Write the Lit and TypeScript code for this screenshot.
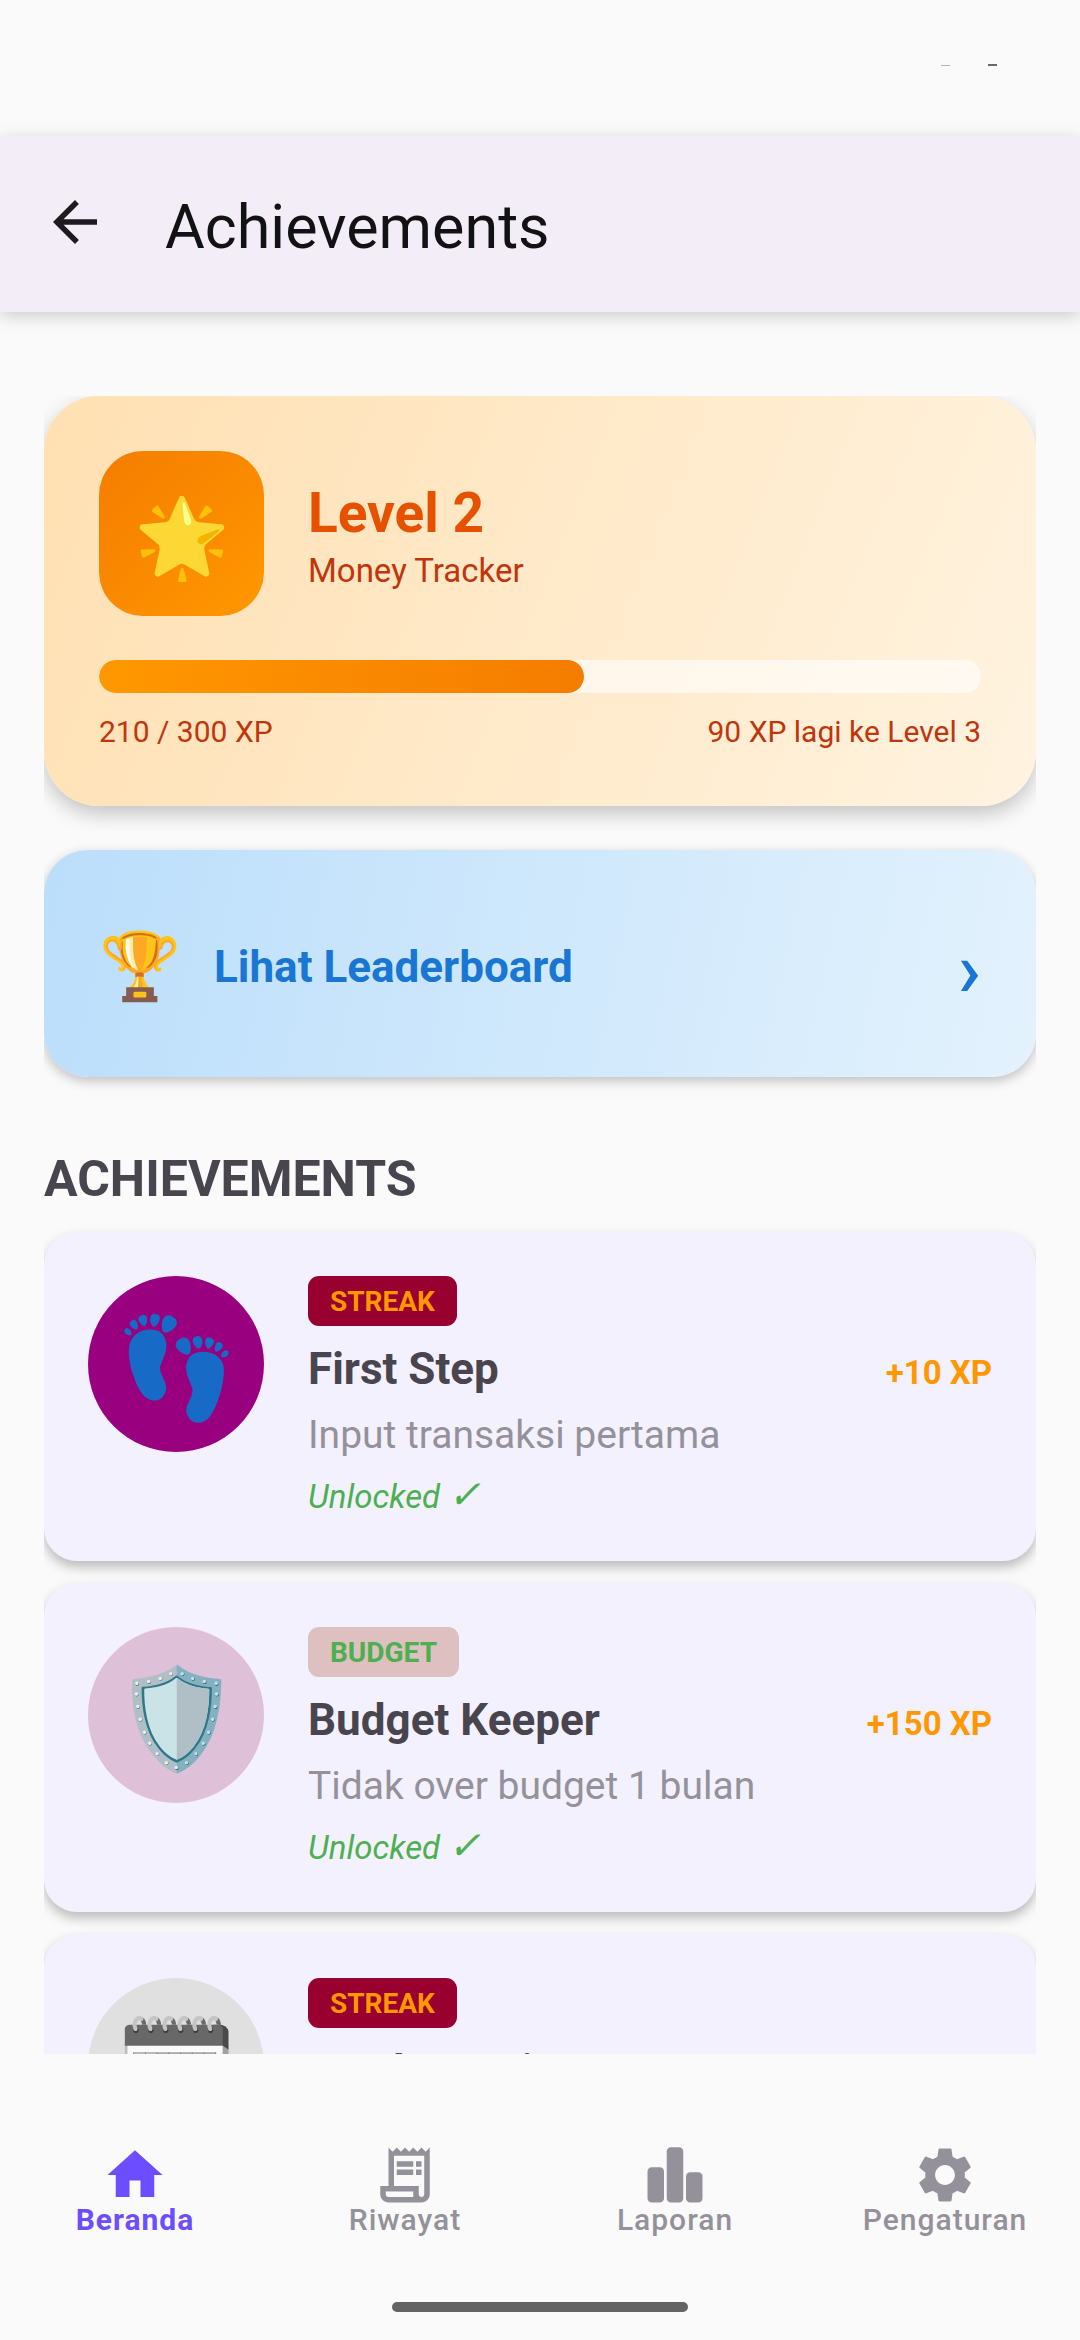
import { LitElement, html, css, svg, nothing } from "lit";
import { customElement, property, state } from "lit/decorators.js";
import { classMap } from "lit/directives/class-map.js";

interface Achievement {
  icon: string;
  category: "streak" | "budget";
  title: string;
  description: string;
  xp: number;
  unlocked: boolean;
}

interface Tab {
  id: string;
  label: string;
  path: string;
}

const ACHIEVEMENTS: Achievement[] = [
  {
    icon: "👣",
    category: "streak",
    title: "First Step",
    description: "Input transaksi pertama",
    xp: 10,
    unlocked: true,
  },
  {
    icon: "🛡️",
    category: "budget",
    title: "Budget Keeper",
    description: "Tidak over budget 1 bulan",
    xp: 150,
    unlocked: true,
  },
  {
    icon: "🗓️",
    category: "streak",
    title: "Week Warrior",
    description: "",
    xp: 0,
    unlocked: false,
  },
];

const TABS: Tab[] = [
  {
    id: "home",
    label: "Beranda",
    path: "M10 20v-6h4v6h5v-8h3L12 3 2 12h3v8z",
  },
  {
    id: "history",
    label: "Riwayat",
    path: "M19.5 3.5L18 2l-1.500 1.500L15 2l-1.500 1.500L12 2l-1.500 1.500L9 2 7.500 3.500 6 2v14H3v3c0 1.660 1.340 3 3 3h12c1.660 0 3-1.340 3-3V2l-1.500 1.500zM15 20H6c-.55 0-1-.45-1-1v-1h10v2zm4-1c0 .55-.45 1-1 1s-1-.45-1-1v-3H8V5h11v14zM9 7h6v2H9zm7 0h2v2h-2zM9 10h6v2H9zm7 0h2v2h-2z",
  },
  {
    id: "report",
    label: "Laporan",
    path: "M3.500 9.200h3A1.500 1.500 0 0 1 8 10.700v9.800A1.500 1.500 0 0 1 6.500 22h-3A1.500 1.500 0 0 1 2 20.500v-9.800A1.500 1.500 0 0 1 3.500 9.200zM10.500 1.900h3A1.500 1.500 0 0 1 15 3.400v17.100a1.500 1.500 0 0 1-1.500 1.500h-3A1.500 1.500 0 0 1 9 20.500V3.400a1.500 1.500 0 0 1 1.500-1.500zM17.500 11h3a1.500 1.500 0 0 1 1.500 1.500v8a1.500 1.500 0 0 1-1.500 1.500h-3a1.500 1.500 0 0 1-1.500-1.500v-8a1.500 1.500 0 0 1 1.500-1.500z",
  },
  {
    id: "settings",
    label: "Pengaturan",
    path: "M19.140 12.940c.04-.3.06-.61.06-.94 0-.32-.02-.64-.07-.94l2.030-1.580c.18-.14.23-.41.12-.61l-1.920-3.320c-.12-.22-.37-.29-.59-.22l-2.390.96c-.5-.38-1.030-.7-1.620-.94l-.36-2.540c-.04-.24-.24-.41-.48-.41h-3.840c-.24 0-.43.17-.47.41l-.36 2.540c-.59.24-1.130.57-1.620.94l-2.390-.96c-.22-.08-.47 0-.59.22L2.740 8.870c-.12.21-.08.47.12.61l2.030 1.580c-.05.3-.09.63-.09.94s.02.64.07.94l-2.030 1.580c-.18.14-.23.41-.12.61l1.920 3.320c.12.22.37.29.59.22l2.390-.96c.5.38 1.030.7 1.620.94l.36 2.540c.05.24.24.41.48.41h3.840c.24 0 .44-.17.47-.41l.36-2.540c.59-.24 1.130-.56 1.620-.94l2.390.96c.22.08.47 0 .59-.22l1.920-3.320c.12-.22.07-.47-.12-.61l-2.010-1.580zM12 15.600c-1.980 0-3.600-1.620-3.600-3.600s1.620-3.600 3.600-3.600 3.600 1.620 3.600 3.600-1.620 3.600-3.600 3.600z",
  },
];

@customElement("level-card")
export class LevelCard extends LitElement {
  static styles = css`
    :host {
      display: block;
    }

    .card {
      padding: 55px;
      border-radius: 55px;
      background: linear-gradient(112deg, #ffe0b2, #fff3e0);
      box-shadow: 0 8px 20px rgba(0, 0, 0, 0.22);
      color: #bf360c;
    }

    .head {
      display: flex;
      align-items: center;
      gap: 44px;
    }

    .emblem {
      display: grid;
      place-items: center;
      width: 165px;
      height: 165px;
      padding-top: 8px;
      border-radius: 44px;
      background: linear-gradient(135deg, #f57c00, #ff9800);
      box-sizing: border-box;
      font-size: 77px;
      line-height: 90px;
    }

    h2 {
      margin: 0;
      font-size: 55px;
      line-height: 74px;
      color: #e65100;
    }

    .rank {
      margin: 0;
      font-size: 33px;
      line-height: 41px;
    }

    .track {
      height: 33px;
      margin: 44px 0 20px;
      border-radius: 17px;
      background: rgba(255, 255, 255, 0.6);
      overflow: hidden;
    }

    .fill {
      height: 100%;
      border-radius: 17px;
      background: linear-gradient(90deg, #ff9800, #f57c00);
    }

    .numbers {
      display: flex;
      justify-content: space-between;
      font-size: 30px;
      line-height: 38px;
    }
  `;

  @property({ type: Number })
  level = 1;

  @property({ type: String })
  rank = "";

  @property({ type: Number })
  xp = 0;

  @property({ type: Number })
  floor = 0;

  @property({ type: Number })
  target = 100;

  render() {
    const progress = ((this.xp - this.floor) / (this.target - this.floor)) * 100;
    return html`
      <section class="card">
        <div class="head">
          <div class="emblem">🌟</div>
          <div>
            <h2>Level ${this.level}</h2>
            <p class="rank">${this.rank}</p>
          </div>
        </div>
        <div class="track">
          <div class="fill" style="width: ${progress}%"></div>
        </div>
        <div class="numbers">
          <span>${this.xp} / ${this.target} XP</span>
          <span>${this.target - this.xp} XP lagi ke Level ${this.level + 1}</span>
        </div>
      </section>
    `;
  }
}

@customElement("achievement-card")
export class AchievementCard extends LitElement {
  static styles = css`
    :host {
      display: block;
    }

    .card {
      display: flex;
      align-items: flex-start;
      gap: 44px;
      padding: 44px;
      border-radius: 33px;
      background: #f4f1ff;
      box-shadow: 0 6px 12px rgba(0, 0, 0, 0.26);
    }

    .icon {
      display: grid;
      place-items: center;
      flex: none;
      width: 176px;
      height: 176px;
      padding-top: 8px;
      border-radius: 50%;
      background: #e0e0e0;
      box-sizing: border-box;
      font-size: 99px;
      line-height: 116px;
    }

    .icon.streak {
      background: #980080;
    }

    .icon.budget {
      background: rgba(175, 80, 128, 0.3);
    }

    .icon.locked {
      background: #e0e0e0;
      filter: grayscale(1);
    }

    .body {
      display: flex;
      flex: 1;
      flex-direction: column;
      align-items: flex-start;
      gap: 18px;
    }

    .badge {
      padding: 9px 22px 7px;
      border-radius: 11px;
      font-size: 28px;
      font-weight: 700;
      line-height: 34px;
      text-transform: uppercase;
    }

    .badge.streak {
      background: #980030;
      color: #ff9800;
    }

    .badge.budget {
      background: rgba(175, 80, 48, 0.3);
      color: #4caf50;
    }

    .row {
      display: flex;
      align-items: baseline;
      justify-content: space-between;
      align-self: stretch;
    }

    h3 {
      margin: 0;
      font-size: 44px;
      line-height: 50px;
      color: #49454f;
    }

    .xp {
      font-size: 33px;
      font-weight: 700;
      line-height: 40px;
      color: #ff9800;
    }

    .description {
      margin: 0;
      font-size: 39px;
      line-height: 46px;
      color: #94919b;
    }

    .status {
      margin: 0;
      font-size: 33px;
      font-style: italic;
      line-height: 41px;
      color: #4caf50;
    }

    .check {
      font-family: Roboto, sans-serif;
      font-size: 39px;
      line-height: 20px;
    }
  `;

  @property({ attribute: false })
  item!: Achievement;

  render() {
    const { icon, category, title, description, xp, unlocked } = this.item;
    const iconClasses = { icon: true, [category]: true, locked: !unlocked };
    return html`
      <article class="card">
        <div class=${classMap(iconClasses)}>${icon}</div>
        <div class="body">
          <span class="badge ${category}">${category}</span>
          <div class="row">
            <h3>${title}</h3>
            ${xp ? html`<span class="xp">+${xp} XP</span>` : nothing}
          </div>
          <p class="description">${description}</p>
          ${unlocked ? html`<p class="status">Unlocked <span class="check">✓</span></p>` : nothing}
        </div>
      </article>
    `;
  }
}

@customElement("app-root")
export class AppRoot extends LitElement {
  static styles = css`
    :host {
      display: flex;
      flex-direction: column;
      height: 100vh;
      background: #fafafa;
      font-family: Roboto, sans-serif;
    }

    button {
      border: 0;
      background: none;
      font: inherit;
      cursor: pointer;
    }

    svg {
      display: block;
      width: 66px;
      height: 66px;
      fill: currentColor;
    }

    .status-bar {
      display: flex;
      flex: none;
      align-items: center;
      justify-content: flex-end;
      gap: 38px;
      height: 130px;
      padding: 0 83px 6px 0;
    }

    .mark {
      width: 9px;
      height: 2px;
      background: #6a6a6a;
    }

    .mark.faint {
      height: 1px;
      background: #b4b4b4;
    }

    .app-bar {
      display: flex;
      flex: none;
      align-items: center;
      gap: 57px;
      height: 176px;
      padding: 0 42px;
      background: #f3edf7;
      box-shadow: 0 4px 16px rgba(0, 0, 0, 0.18);
      box-sizing: border-box;
    }

    .back {
      padding: 0 0 4px;
      color: #1d1b20;
    }

    h1 {
      margin: 0;
      padding-top: 6px;
      font-size: 61px;
      font-weight: 400;
      line-height: 72px;
      color: #121214;
    }

    .content {
      flex: 1;
      min-height: 0;
      margin: 84px 44px 0;
      overflow: hidden auto;
      scrollbar-width: none;
    }

    .leaderboard {
      display: flex;
      align-items: center;
      gap: 33px;
      width: 100%;
      min-height: 227px;
      margin-top: 44px;
      padding: 6px 55px 0;
      border-radius: 44px;
      background: linear-gradient(102deg, #bbdefb, #e3f2fd);
      box-shadow: 0 4px 12px rgba(0, 0, 0, 0.24);
      color: #1976d2;
      text-align: left;
    }

    .trophy {
      font-size: 66px;
      line-height: 78px;
    }

    .link-text {
      flex: 1;
      font-size: 44px;
      font-weight: 700;
      line-height: 52px;
    }

    .chevron {
      padding-top: 6px;
      font-size: 77px;
      font-weight: 500;
      line-height: 90px;
    }

    .section-title {
      margin: 72px 0 22px;
      font-size: 50px;
      line-height: 61px;
      color: #49454f;
    }

    .list {
      display: flex;
      flex-direction: column;
      gap: 22px;
    }

    .tabs {
      display: flex;
      flex: none;
      height: 248px;
      padding-top: 88px;
      box-sizing: border-box;
    }

    .tab {
      display: flex;
      flex: 1;
      flex-direction: column;
      align-items: center;
      padding: 0;
      font-size: 30px;
      font-weight: 500;
      letter-spacing: 1px;
      line-height: 24px;
      color: #94919b;
    }

    .tab.active {
      font-weight: 700;
      color: #6c4dff;
    }

    .home-indicator {
      flex: none;
      align-self: center;
      width: 296px;
      height: 10px;
      margin-bottom: 28px;
      border-radius: 5px;
      background: #646464;
    }
  `;

  @state()
  private _tab = "home";

  render() {
    return html`
      <div class="status-bar">
        <span class="mark faint"></span>
        <span class="mark"></span>
      </div>
      <header class="app-bar">
        <button class="back" aria-label="Kembali">
          ${this._renderIcon("M20 11H7.830l5.590-5.590L12 4l-8 8 8 8 1.410-1.410L7.830 13H20v-2z")}
        </button>
        <h1>Achievements</h1>
      </header>
      <main class="content">
        <level-card level="2" rank="Money Tracker" xp="210" floor="100" target="300"></level-card>
        <button class="leaderboard">
          <span class="trophy">🏆</span>
          <span class="link-text">Lihat Leaderboard</span>
          <span class="chevron">›</span>
        </button>
        <h2 class="section-title">ACHIEVEMENTS</h2>
        <div class="list">
          ${ACHIEVEMENTS.map((item) => html`<achievement-card .item=${item}></achievement-card>`)}
        </div>
      </main>
      <nav class="tabs">${TABS.map((tab) => this._renderTab(tab))}</nav>
      <div class="home-indicator"></div>
    `;
  }

  private _renderIcon(path: string) {
    return html`<svg viewBox="0 0 24 24" aria-hidden="true">${svg`<path d=${path} />`}</svg>`;
  }

  private _renderTab(tab: Tab) {
    return html`
      <button
        class=${classMap({ tab: true, active: this._tab === tab.id })}
        @click=${() => (this._tab = tab.id)}
      >
        ${this._renderIcon(tab.path)}
        <span>${tab.label}</span>
      </button>
    `;
  }
}

declare global {
  interface HTMLElementTagNameMap {
    "app-root": AppRoot;
    "level-card": LevelCard;
    "achievement-card": AchievementCard;
  }
}
